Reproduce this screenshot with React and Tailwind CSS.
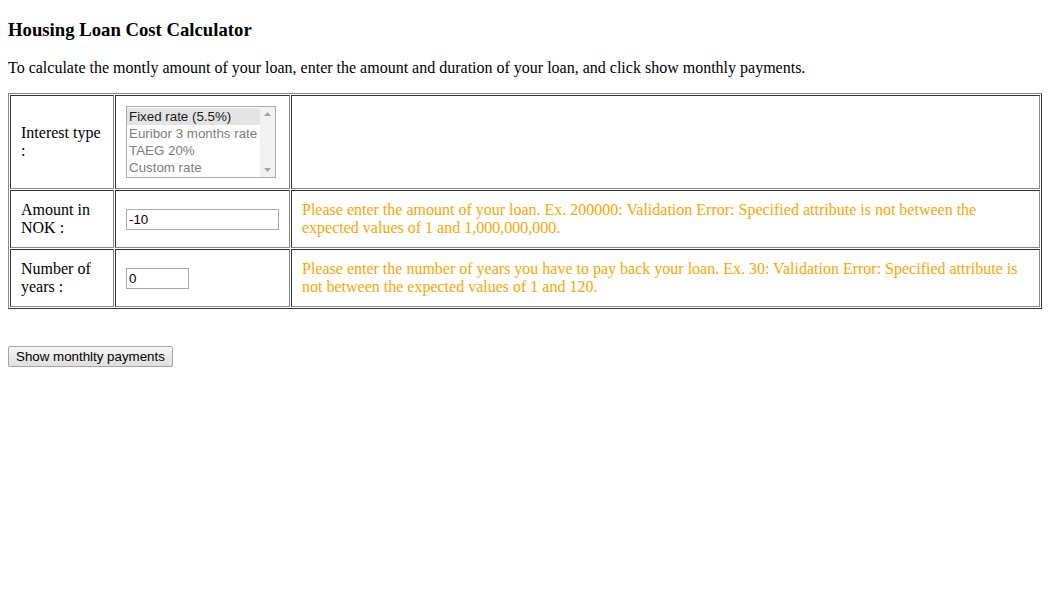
import React from 'react';

const serif = "font-['Liberation_Serif','Times_New_Roman',serif]";
const sans = "font-['Liberation_Sans',Arial,sans-serif]";

const rates = ['Fixed rate (5.5%)', 'Euribor 3 months rate', 'TAEG 20%', 'Custom rate'];

function RateList() {
    return (
        <div className={`flex w-[150px] h-[72px] border border-[#a9a9a9] bg-white ${sans} text-[13.33px] leading-[17px]`}>
            <div className="flex-1 py-px overflow-hidden">
                {rates.map((rate, i) => (
                    <div
                        key={rate}
                        className={`pl-[2px] whitespace-nowrap ${i === 0 ? 'bg-[#e3e3e3] text-[#1a1a1a]' : 'text-[#7d7d7d]'}`}
                    >
                        {rate}
                    </div>
                ))}
            </div>
            <div className="w-[15px] bg-[#f1f1f1] flex flex-col justify-between items-center py-[5px]">
                <svg width="7" height="4" viewBox="0 0 7 4"><path d="M3.5 0 L7 4 L0 4 Z" fill="#a3a3a3" /></svg>
                <svg width="7" height="4" viewBox="0 0 7 4"><path d="M0 0 L7 0 L3.5 4 Z" fill="#a3a3a3" /></svg>
            </div>
        </div>
    );
}

function Cell({ children, className = '' }) {
    return (
        <td className={`border border-t-[#333] border-l-[#333] border-b-[#8a8a8a] border-r-[#8a8a8a] p-[10px] align-middle text-left leading-[18px] ${className}`}>
            {children}
        </td>
    );
}

export default function App() {
    return (
        <div className={`min-h-screen bg-white text-black px-2 pb-2 ${serif} text-base leading-[1.15]`}>
            <h3 className="text-[18.72px] font-bold mt-[18.72px] mb-[18.72px] leading-[21.5px]">Housing Loan Cost Calculator</h3>
            <p className="mb-4 leading-[18.4px]">
                To calculate the montly amount of your loan, enter the amount and duration of your loan, and click show monthly payments.
            </p>

            {/* Formulario */}
            <table className="mt-px w-[1034px] border-separate border-spacing-x-[1px] border-spacing-y-[1px] border border-t-[#8a8a8a] border-l-[#8a8a8a] border-b-[#333] border-r-[#333]">
                <tbody>
                    <tr>
                        <Cell className="w-[104px] h-[94px]">Interest type :</Cell>
                        <Cell className="w-[175px]"><RateList /></Cell>
                        <Cell className="w-[749px]"></Cell>
                    </tr>
                    <tr>
                        <Cell>Amount in NOK :</Cell>
                        <Cell>
                            <input
                                type="text"
                                defaultValue="-10"
                                className={`block w-[153px] h-[21px] border border-[#a9a9a9] px-[2px] ${sans} text-[13.33px] text-black outline-none`}
                            />
                        </Cell>
                        <Cell className="text-[#ffa500]">
                            Please enter the amount of your loan. Ex. 200000: Validation Error: Specified attribute is not between the expected values of 1 and 1,000,000,000.
                        </Cell>
                    </tr>
                    <tr>
                        <Cell>Number of years :</Cell>
                        <Cell>
                            <input
                                type="text"
                                defaultValue="0"
                                className={`block w-[63px] h-[21px] border border-[#a9a9a9] px-[2px] ${sans} text-[13.33px] text-black outline-none`}
                            />
                        </Cell>
                        <Cell className="text-[#ffa500]">
                            Please enter the number of years you have to pay back your loan. Ex. 30: Validation Error: Specified attribute is not between the expected values of 1 and 120.
                        </Cell>
                    </tr>
                </tbody>
            </table>

            <div className="mt-[37px]">
                <button
                    type="button"
                    className={`h-[21px] px-[7px] border border-[#a6a6a6] rounded-[2px] bg-gradient-to-b from-[#f6f6f6] to-[#dedede] ${sans} text-[13.33px] text-black leading-none`}
                >
                    Show monthlty payments
                </button>
            </div>
        </div>
    );
}
